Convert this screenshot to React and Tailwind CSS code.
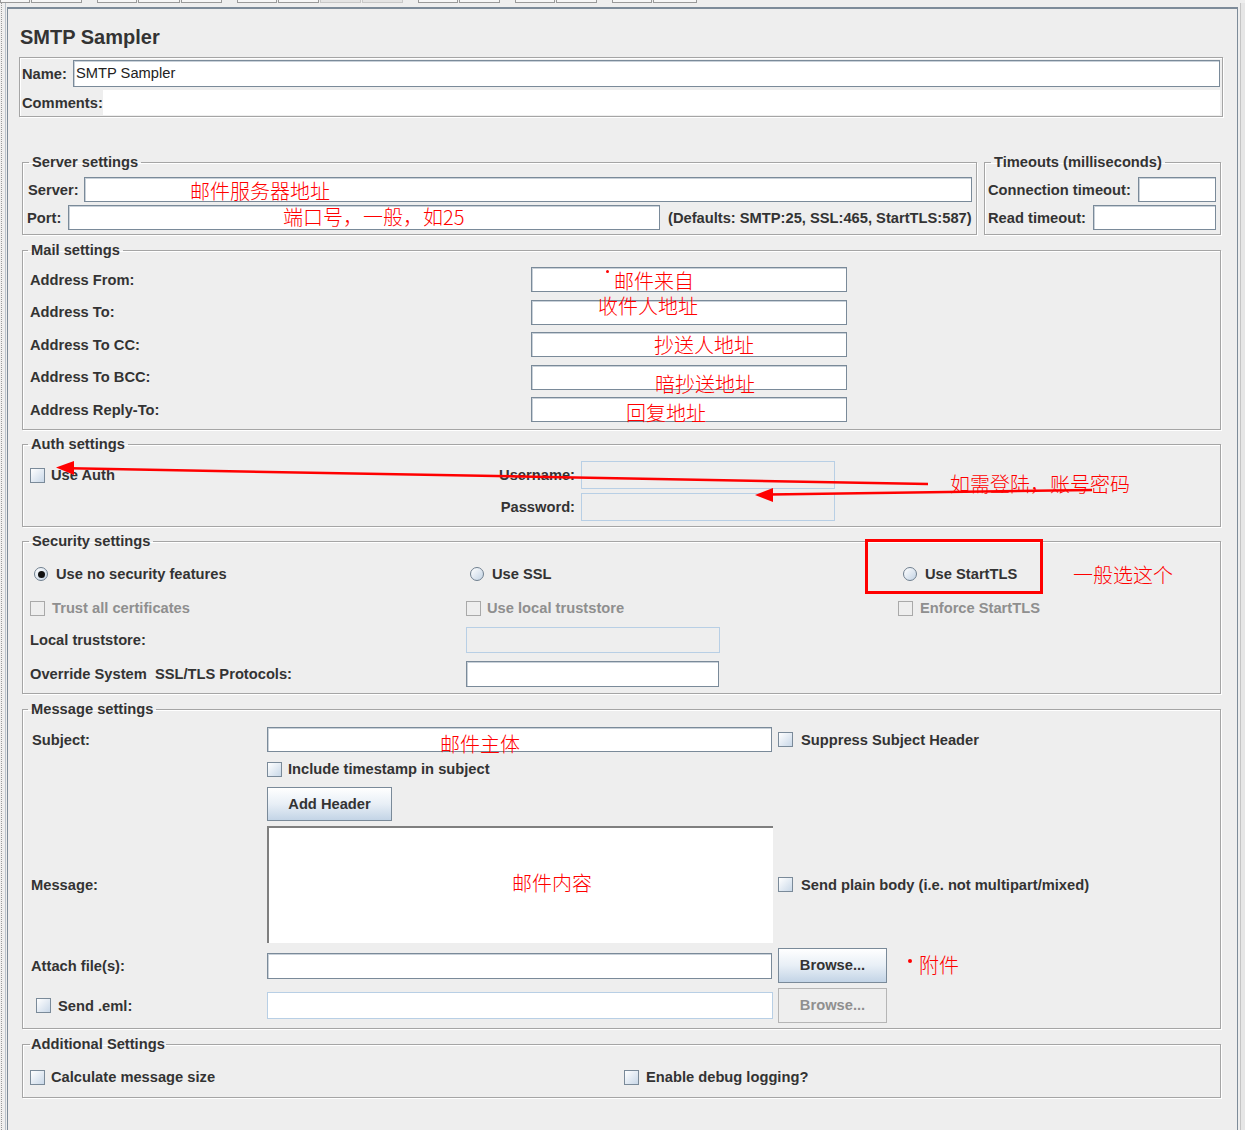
import React from "react";

const LBL = "font-bold text-[#333333] text-[14.7px] leading-[18px] whitespace-nowrap";
const DIS = "font-bold text-[#8f8f8f] text-[14.7px] leading-[18px] whitespace-nowrap";
const FS = "border border-[#a5a5a5] shadow-[inset_1px_1px_0_#ffffff,1px_1px_0_#ffffff] min-w-0";
const LEG = "ml-[6px] px-[3px] font-bold text-[#333333] text-[14.7px] leading-[18px] whitespace-nowrap";
const INPUT = "bg-white border border-[#7a8a99] shadow-[inset_1px_1px_0_#c9d1d9]";
const INPUT_DIS = "bg-[#eeeeee] border border-[#b8cfe5]";
const RED = "absolute text-[#ff0000] text-[20px] leading-[20px] font-light whitespace-nowrap font-['Noto_Sans_CJK_SC',sans-serif]";
const BTN = "flex items-center justify-center border border-[#7a8a99] bg-linear-to-b from-[#ffffff] via-[#e8eff6] to-[#c3d4e6] font-bold text-[#333333] text-[14.7px]";
const BTN_DIS = "flex items-center justify-center border border-[#b5b5b5] bg-[#eeeeee] font-bold text-[#8f8f8f] text-[14.7px]";

function Check({ disabled }) {
  return disabled ? (
    <span className="inline-block w-[15px] h-[15px] shrink-0 border border-[#a9a9a9] bg-[#eeeeee]" />
  ) : (
    <span className="inline-block w-[15px] h-[15px] shrink-0 border border-[#7a8a99] bg-linear-to-br from-[#ffffff] to-[#c9d8e8]" />
  );
}

function Radio({ checked }) {
  return (
    <span className="flex items-center justify-center w-[14px] h-[14px] shrink-0 rounded-full border border-[#6f7f8f] bg-linear-to-br from-[#ffffff] to-[#c3d3e4]">
      {checked && <span className="w-[7px] h-[7px] rounded-full bg-[#111111]" />}
    </span>
  );
}

const tabs = [
  [0, 30], [31, 82],
  [97, 137], [138, 180], [181, 222],
  [237, 277], [278, 319], [320, 361, 1], [362, 403, 1],
  [418, 458], [459, 500],
  [515, 555], [556, 597],
  [612, 652], [653, 697],
];

export default function App() {
  return (
    <div className="relative w-[1245px] h-[1130px] overflow-hidden bg-[#eeeeee] font-['Liberation_Sans','Noto_Sans_CJK_SC',sans-serif] flex flex-col">
      {/* top strip of toolbar boxes */}
      <div className="relative h-[3px] shrink-0">
        {tabs.map(([a, b, light], i) => (
          <span
            key={i}
            className={
              light
                ? "absolute top-0 h-[3px] border-x border-b border-[#c8c8c8] bg-[#e4e4e4]"
                : "absolute top-0 h-[3px] border-x border-b border-[#9a9a9a] bg-[#f6f6f6]"
            }
            style={{ left: a, width: b - a }}
          />
        ))}
      </div>

      <div className="flex flex-1 min-h-0">
        {/* left gutter */}
        <div className="w-[7px] shrink-0 flex">
          <div className="ml-[1px] w-[1px] border-l border-dotted border-[#9a9a9a]" />
          <div className="ml-[3px] w-[1px] bg-[#b9c2cb]" />
        </div>

        {/* main panel */}
        <div className="w-[1231px] shrink-0 mt-[4px] border-l border-r border-t-2 border-[#7d8b99] flex flex-col">
          <div className="ml-[12px] mt-[16px] text-[20px] leading-[24px] font-bold text-[#333333]">SMTP Sampler</div>

          {/* name / comments */}
          <div className="mt-[8px] ml-[11px] mr-[14px] border border-[#a5a5a5] shadow-[inset_1px_1px_0_#ffffff,1px_1px_0_#ffffff] px-[2px] pt-[2px] pb-[1px]">
            <div className="flex items-center h-[27px]">
              <span className={LBL + " w-[51px]"}>Name:</span>
              <div className={INPUT + " flex-1 h-[27px] flex items-center pl-[2px] text-[14.7px] text-[#222222]"}>SMTP Sampler</div>
            </div>
            <div className="flex items-center h-[25px] mt-[3px]">
              <span className={LBL + " w-[81px]"}>Comments:</span>
              <div className="flex-1 h-[25px] bg-white" />
            </div>
          </div>

          <div className="ml-[14px] mr-[16px] flex flex-col">
            {/* server + timeouts */}
            <div className="mt-[36px] flex gap-[7px]">
              <fieldset className={FS + " flex-1"}>
                <legend className={LEG}>Server settings</legend>
                <div className="pt-[6px] pb-[4px] pl-[4px] pr-[4px] flex flex-col gap-[3px]">
                  <div className="flex items-center h-[25px]">
                    <span className={LBL + " w-[57px] pl-[1px]"}>Server:</span>
                    <div className={INPUT + " flex-1 h-[25px]"} />
                  </div>
                  <div className="flex items-center h-[25px]">
                    <span className={LBL + " w-[41px]"}>Port:</span>
                    <div className={INPUT + " w-[592px] h-[25px]"} />
                    <span className={LBL + " ml-[8px]"}>(Defaults: SMTP:25, SSL:465, StartTLS:587)</span>
                  </div>
                </div>
              </fieldset>
              <fieldset className={FS + " w-[237px] shrink-0"}>
                <legend className={LEG}>Timeouts (milliseconds)</legend>
                <div className="pt-[6px] pb-[4px] pl-[3px] pr-[4px] flex flex-col gap-[3px]">
                  <div className="flex items-center justify-between h-[25px]">
                    <span className={LBL}>Connection timeout:</span>
                    <div className={INPUT + " w-[78px] h-[25px]"} />
                  </div>
                  <div className="flex items-center justify-between h-[25px]">
                    <span className={LBL}>Read timeout:</span>
                    <div className={INPUT + " w-[123px] h-[25px]"} />
                  </div>
                </div>
              </fieldset>
            </div>

            {/* mail settings */}
            <fieldset className={FS + " mt-[6px]"}>
              <legend className={"ml-[5px] px-[3px] " + LBL}>Mail settings</legend>
              <div className="pt-[8px] pb-[7px] pl-[7px] grid grid-cols-[501px_316px] gap-y-[7.5px]">
                {["Address From:", "Address To:", "Address To CC:", "Address To BCC:", "Address Reply-To:"].map((t) => (
                  <React.Fragment key={t}>
                    <div className="flex items-center h-[25px]">
                      <span className={LBL}>{t}</span>
                    </div>
                    <div className={INPUT + " h-[25px]"} />
                  </React.Fragment>
                ))}
              </div>
            </fieldset>

            {/* auth settings */}
            <fieldset className={FS + " mt-[5px]"}>
              <legend className={"ml-[5px] px-[3px] " + LBL}>Auth settings</legend>
              <div className="pt-[8px] pb-[5px] w-[812px] flex flex-col gap-[4px]">
                <div className="flex items-center h-[28px]">
                  <div className="flex items-center gap-[6px] pl-[7px] flex-1">
                    <Check />
                    <span className={LBL}>Use Auth</span>
                  </div>
                  <span className={LBL}>Username:</span>
                  <div className={INPUT_DIS + " ml-[6px] w-[254px] h-[28px]"} />
                </div>
                <div className="flex items-center justify-end h-[28px]">
                  <span className={LBL}>Password:</span>
                  <div className={INPUT_DIS + " ml-[6px] w-[254px] h-[28px]"} />
                </div>
              </div>
            </fieldset>

            {/* security settings */}
            <fieldset className={FS + " mt-[5px]"}>
              <legend className={LEG}>Security settings</legend>
              <div className="pt-[10px] pb-[6px] pl-[7px] flex flex-col">
                <div className="grid grid-cols-[436px_432px_1fr] h-[28px] items-center">
                  <div className="flex items-center gap-[8px] ml-[4px]">
                    <Radio checked />
                    <span className={LBL}>Use no security features</span>
                  </div>
                  <div className="flex items-center gap-[8px] ml-[4px]">
                    <Radio />
                    <span className={LBL}>Use SSL</span>
                  </div>
                  <div className="flex items-center gap-[8px] ml-[5px]">
                    <Radio />
                    <span className={LBL}>Use StartTLS</span>
                  </div>
                </div>
                <div className="grid grid-cols-[436px_432px_1fr] h-[24px] items-center mt-[8px]">
                  <div className="flex items-center gap-[7px]">
                    <Check disabled />
                    <span className={DIS}>Trust all certificates</span>
                  </div>
                  <div className="flex items-center gap-[6px]">
                    <Check disabled />
                    <span className={DIS}>Use local truststore</span>
                  </div>
                  <div className="flex items-center gap-[7px]">
                    <Check disabled />
                    <span className={DIS}>Enforce StartTLS</span>
                  </div>
                </div>
                <div className="grid grid-cols-[436px_1fr] h-[26px] items-center mt-[7px]">
                  <span className={LBL}>Local truststore:</span>
                  <div className={INPUT_DIS + " w-[254px] h-[26px]"} />
                </div>
                <div className="grid grid-cols-[436px_1fr] h-[26px] items-center mt-[8px]">
                  <span className={LBL + " whitespace-pre"}>Override System  SSL/TLS Protocols:</span>
                  <div className={INPUT + " w-[253px] h-[26px]"} />
                </div>
              </div>
            </fieldset>

            {/* message settings */}
            <fieldset className={FS + " mt-[6px]"}>
              <legend className={"ml-[5px] px-[3px] " + LBL}>Message settings</legend>
              <div className="pt-[9px] pb-[5px] flex flex-col">
                <div className="flex items-center h-[25px]">
                  <span className={LBL + " w-[244px] pl-[9px]"}>Subject:</span>
                  <div className={INPUT + " w-[505px] h-[25px]"} />
                  <div className="flex items-center gap-[8px] ml-[6px]">
                    <Check />
                    <span className={LBL}>Suppress Subject Header</span>
                  </div>
                </div>
                <div className="flex items-center h-[18px] mt-[8px] pl-[244px] gap-[6px]">
                  <Check />
                  <span className={LBL}>Include timestamp in subject</span>
                </div>
                <div className="flex mt-[9px] pl-[244px]">
                  <div className={BTN + " w-[125px] h-[34px]"}>Add Header</div>
                </div>
                <div className="flex items-center mt-[5px]">
                  <span className={LBL + " w-[244px] pl-[8px]"}>Message:</span>
                  <div className="w-[506px] h-[117px] bg-white border-t-2 border-l-2 border-[#7f7f7f]" />
                  <div className="flex items-center gap-[8px] ml-[5px]">
                    <Check />
                    <span className={LBL}>Send plain body (i.e. not multipart/mixed)</span>
                  </div>
                </div>
                <div className="flex items-center mt-[5px] h-[35px]">
                  <span className={LBL + " w-[244px] pl-[8px]"}>Attach file(s):</span>
                  <div className={INPUT + " w-[505px] h-[26px]"} />
                  <div className={BTN + " ml-[6px] w-[109px] h-[35px]"}>Browse...</div>
                </div>
                <div className="flex items-center mt-[5px] h-[35px]">
                  <div className="w-[244px] flex items-center gap-[7px] pl-[13px]">
                    <Check />
                    <span className={LBL}>Send .eml:</span>
                  </div>
                  <div className="w-[506px] h-[27px] bg-white border border-[#b8cfe5]" />
                  <div className={BTN_DIS + " ml-[5px] w-[109px] h-[35px]"}>Browse...</div>
                </div>
              </div>
            </fieldset>

            {/* additional settings */}
            <fieldset className={FS + " mt-[6px]"}>
              <legend className={"ml-[7px] px-[1px] " + LBL}>Additional Settings</legend>
              <div className="pt-[12px] pb-[8px] pl-[7px] grid grid-cols-[594px_1fr] h-[44px] items-center">
                <div className="flex items-center gap-[6px]">
                  <Check />
                  <span className={LBL}>Calculate message size</span>
                </div>
                <div className="flex items-center gap-[7px]">
                  <Check />
                  <span className={LBL}>Enable debug logging?</span>
                </div>
              </div>
            </fieldset>
          </div>
        </div>

        {/* right gutter */}
        <div className="flex-1 flex">
          <div className="ml-[2px] w-[1px] bg-[#c4c4c4]" />
          <div className="flex-1 bg-[#e6e6e6]" />
        </div>
      </div>

      {/* red annotations overlay */}
      <span className={RED} style={{ left: 190, top: 181 }}>邮件服务器地址</span>
      <span className={RED} style={{ left: 283, top: 207 }}>端口号，一般，如25</span>
      <span className="absolute w-[3px] h-[3px] rounded-full bg-[#ff0000]" style={{ left: 606, top: 270 }} />
      <span className={RED} style={{ left: 614, top: 271 }}>邮件来自</span>
      <span className={RED} style={{ left: 598, top: 296 }}>收件人地址</span>
      <span className={RED} style={{ left: 654, top: 335 }}>抄送人地址</span>
      <span className={RED} style={{ left: 655, top: 374 }}>暗抄送地址</span>
      <span className={RED} style={{ left: 626, top: 403 }}>回复地址</span>
      <span className={RED} style={{ left: 950, top: 474 }}>如需登陆，账号密码</span>
      <span className={RED} style={{ left: 1073, top: 565 }}>一般选这个</span>
      <span className={RED} style={{ left: 440, top: 734 }}>邮件主体</span>
      <span className={RED} style={{ left: 512, top: 873 }}>邮件内容</span>
      <span className="absolute w-[4px] h-[4px] rounded-full bg-[#ff0000]" style={{ left: 908, top: 959 }} />
      <span className={RED} style={{ left: 919, top: 955 }}>附件</span>

      <div className="absolute border-[3px] border-[#ff0000]" style={{ left: 865, top: 539, width: 178, height: 55 }} />

      <svg className="absolute left-0 top-0 pointer-events-none" width="1245" height="1130" viewBox="0 0 1245 1130">
        <line x1="70" y1="468.3" x2="928" y2="484" stroke="#ff0000" strokeWidth="2.5" />
        <polygon points="56,467.5 74,461 74,475" fill="#ff0000" />
        <line x1="770" y1="494.6" x2="1092" y2="490" stroke="#ff0000" strokeWidth="2.5" />
        <polygon points="755,495 773,488 773,502" fill="#ff0000" />
      </svg>
    </div>
  );
}
